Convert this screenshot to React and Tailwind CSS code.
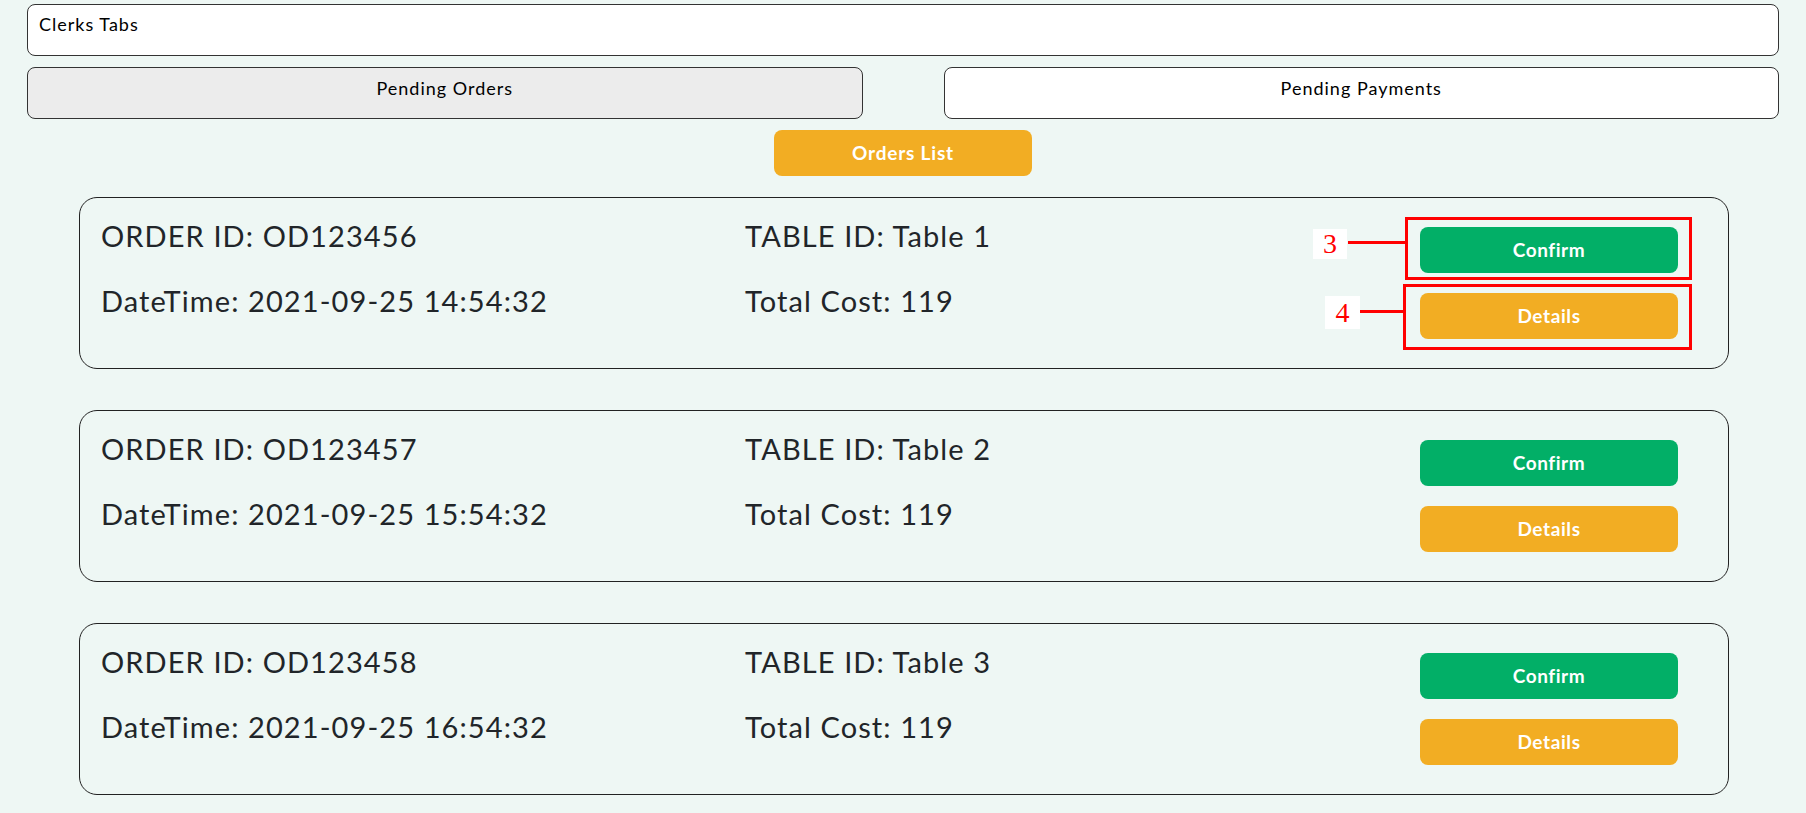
import React from 'react';

const orders = [
  { id: 'OD123456', table: 'Table 1', time: '2021-09-25 14:54:32', cost: 119 },
  { id: 'OD123457', table: 'Table 2', time: '2021-09-25 15:54:32', cost: 119 },
  { id: 'OD123458', table: 'Table 3', time: '2021-09-25 16:54:32', cost: 119 },
];

const OrderCard = ({ order, annotated }) => (
  <div className="relative flex h-[172px] items-start rounded-[18px] border border-[#222] pl-[21px] pr-[50px] pt-[20px]">
    <div className="grid flex-1 grid-cols-[644px_1fr] gap-y-[30px] text-[29px] leading-[35px] tracking-[1.1px] text-[#212529]">
      <div>ORDER ID: {order.id}</div>
      <div>TABLE ID: {order.table}</div>
      <div>DateTime: {order.time}</div>
      <div>Total Cost: {order.cost}</div>
    </div>
    <div className="mt-[9px] flex w-[258px] flex-col gap-[20px]">
      <button className="h-[46px] rounded-lg bg-[#02af67] text-[19px] font-bold tracking-[0.6px] text-white">Confirm</button>
      <button className="h-[46px] rounded-lg bg-[#f2ad23] text-[19px] font-bold tracking-[0.6px] text-white">Details</button>
    </div>

    {annotated && (
      <>
        {/* annotation 3 */}
        <div className="absolute left-[1325px] top-[19px] h-[63px] w-[287px] border-[3px] border-[#ff0000]" />
        <div className="absolute left-[1268px] top-[43px] h-[3px] w-[58px] bg-[#ff0000]" />
        <div className="absolute left-[1233px] top-[31px] flex h-[30px] w-[34px] items-center justify-center bg-white font-['Liberation_Serif',serif] text-[28px] leading-none text-[#ff0000]">3</div>
        {/* annotation 4 */}
        <div className="absolute left-[1323px] top-[86px] h-[66px] w-[289px] border-[3px] border-[#ff0000]" />
        <div className="absolute left-[1280px] top-[112px] h-[3px] w-[44px] bg-[#ff0000]" />
        <div className="absolute left-[1245px] top-[98px] flex h-[33px] w-[35px] items-center justify-center bg-white font-['Liberation_Serif',serif] text-[28px] leading-none text-[#ff0000]">4</div>
      </>
    )}
  </div>
);

export default function App() {
  return (
    <div className="min-h-screen bg-[#eef7f4] px-[27px] pt-[4px] font-['Lato',sans-serif]">
      {/* title bar */}
      <div className="h-[52px] rounded-lg border border-[#333] bg-white px-[11px] pt-[8px] text-[18px] leading-[22px] tracking-[1px] text-black">
        Clerks Tabs
      </div>

      {/* tabs */}
      <div className="mt-[11px] grid grid-cols-2 gap-[81px]">
        <button className="h-[52px] rounded-lg border border-[#333] bg-[#ececec] pb-[9px] text-[18px] tracking-[1px] text-black">Pending Orders</button>
        <button className="h-[52px] rounded-lg border border-[#333] bg-white pb-[9px] text-[18px] tracking-[1px] text-black">Pending Payments</button>
      </div>

      <div className="mt-[11px] flex justify-center">
        <button className="h-[46px] w-[258px] rounded-lg bg-[#f2ad23] text-[19px] font-bold tracking-[0.8px] text-white">Orders List</button>
      </div>

      <div className="ml-[52px] mt-[21px] flex w-[1650px] flex-col gap-[41px] pb-4">
        {orders.map((o, i) => (
          <OrderCard key={o.id} order={o} annotated={i === 0} />
        ))}
      </div>
    </div>
  );
}
